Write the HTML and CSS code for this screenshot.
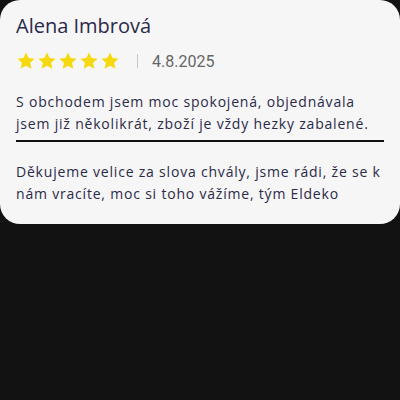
FILE: index.html
```html
<!DOCTYPE html>
<html lang="cs">
<head>
  <meta charset="utf-8">
  <title>Recenze</title>
  <link rel="stylesheet" href="styles.css">
</head>
<body>
  <div class="review">
    <h2 class="review-name">Alena Imbrová</h2>
    <div class="review-meta">
      <div class="stars">
        <svg class="star" viewBox="0 0 24 24"><path d="M12 1.8l3.1 6.6 7.2.8-5.4 4.9 1.5 7.1L12 17.6l-6.4 3.6 1.5-7.1-5.4-4.9 7.2-.8z"/></svg>
        <svg class="star" viewBox="0 0 24 24"><path d="M12 1.8l3.1 6.6 7.2.8-5.4 4.9 1.5 7.1L12 17.6l-6.4 3.6 1.5-7.1-5.4-4.9 7.2-.8z"/></svg>
        <svg class="star" viewBox="0 0 24 24"><path d="M12 1.8l3.1 6.6 7.2.8-5.4 4.9 1.5 7.1L12 17.6l-6.4 3.6 1.5-7.1-5.4-4.9 7.2-.8z"/></svg>
        <svg class="star" viewBox="0 0 24 24"><path d="M12 1.8l3.1 6.6 7.2.8-5.4 4.9 1.5 7.1L12 17.6l-6.4 3.6 1.5-7.1-5.4-4.9 7.2-.8z"/></svg>
        <svg class="star" viewBox="0 0 24 24"><path d="M12 1.8l3.1 6.6 7.2.8-5.4 4.9 1.5 7.1L12 17.6l-6.4 3.6 1.5-7.1-5.4-4.9 7.2-.8z"/></svg>
      </div>
      <span class="sep"></span>
      <span class="date">4.8.2025</span>
    </div>
    <p class="review-text">S obchodem jsem moc spokojená, objednávala jsem již několikrát, zboží je vždy hezky zabalené.</p>
    <hr class="review-line">
    <p class="review-reply">Děkujeme velice za slova chvály, jsme rádi, že se k nám vracíte, moc si toho vážíme, tým Eldeko</p>
  </div>
</body>
</html>
```

FILE: styles.css
```css
body {
  margin: 0;
  background: #121212;
  font-family: "Open Sans", "DejaVu Sans", sans-serif;
}

.review {
  background: #f6f6f6;
  border-radius: 20px;
  padding: 12px 16px 19px;
  color: #2a2a48;
}

.review-name {
  margin: 0;
  font-size: 20px;
  font-weight: 400;
  line-height: 28px;
}

.review-meta {
  display: flex;
  align-items: center;
  margin-top: 10px;
  height: 22px;
}

.stars {
  display: flex;
  gap: 1px;
}

.star {
  width: 20px;
  height: 20px;
  fill: #f5d90c;
}

.sep {
  width: 1px;
  height: 14px;
  background: #c8c8c8;
  margin: 0 14px 0 17px;
}

.date {
  font-family: Roboto, "Liberation Sans", sans-serif;
  font-size: 16px;
  color: #666;
}

.review-text,
.review-reply {
  margin: 0;
  font-size: 14px;
  line-height: 22px;
  letter-spacing: 0.8px;
}

.review-text {
  margin-top: 19px;
}

.review-line {
  border: none;
  height: 2px;
  background: #111;
  margin: 5px 0 19px;
}
```
